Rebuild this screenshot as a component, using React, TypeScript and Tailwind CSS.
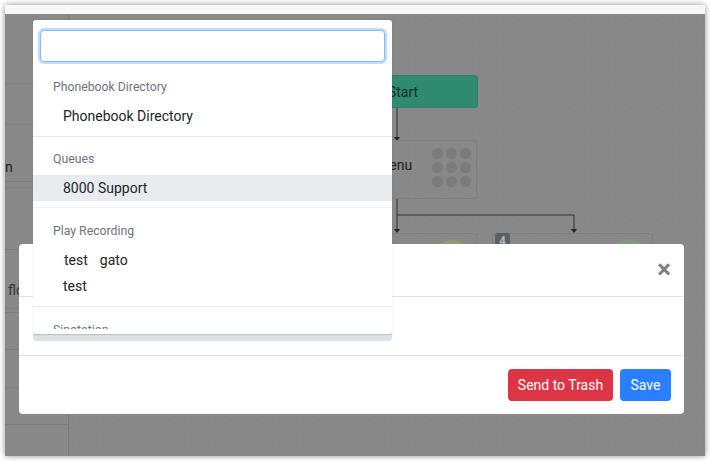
export default function App() {
  const rows = [
    "h-[70px]",
    "h-[41px]",
    "h-[57px]",
    "h-[6px]",
    "h-[62px]",
    "h-[59px]",
    "h-[4px]",
    "h-[37px]",
    "h-[38px]",
    "h-[37px]",
  ];
  return (
    <div className="h-[461px] w-[710px] overflow-hidden bg-white p-[5px] font-['Roboto',sans-serif]">
      <div className="relative flex h-[451px] w-[700px] flex-col overflow-hidden bg-[#888888] shadow-[0_0_6px_rgba(0,0,0,0.45)]">
        <div className="h-[9px] shrink-0 bg-[#f7f7f7]" />
        <div className="flex min-h-0 flex-1">
          <div className="relative w-[64px] shrink-0 border-r border-[#7a7a7a]">
            {rows.map((h, i) => (
              <div key={i} className={`${h} border-b border-[#7b7b7b]`} />
            ))}
            <span className="absolute left-0 top-[143px] text-[14px] text-[#222]">n</span>
            <span className="absolute left-[3px] top-[266px] text-[14px] text-[#333]">flo</span>
          </div>
          <div className="relative flex-1 bg-[radial-gradient(circle,#969696_0.7px,transparent_1px)] bg-[size:12.5px_12.5px]">
            <svg className="absolute left-[0px] top-[0px]" width="636" height="300" fill="none">
              <path d="M328 94V124M328 185V216M328 201H505V216" stroke="#333333" strokeWidth="1" />
              <path d="M325 123h6l-3 4zM325 215h6l-3 4zM502 215h6l-3 4z" fill="#222" />
            </svg>
            <div className="absolute left-[247px] top-[61px] flex h-[33px] w-[162px] items-center justify-center rounded-[3px] border border-[#2a8068] bg-[#2f8a70] text-sm text-[#1d2a26]">
              <span className="ml-[12px]">Start</span>
            </div>
            <div className="absolute left-[247px] top-[126px] flex h-[59px] w-[161px] items-start justify-between rounded-[3px] border border-[#7e7e7e] pl-[60px] pr-[5px] pt-[7px]">
              <span className="mt-[7px] text-[14px] leading-[20px] text-[#222]">Menu</span>
              <div className="grid grid-cols-3 gap-[3px]">
                {[0, 1, 2, 3, 4, 5, 6, 7, 8].map((i) => (
                  <div key={i} className="h-[11px] w-[11px] rounded-full bg-[#7b7b7b]" />
                ))}
              </div>
            </div>
            <div className="absolute left-[247px] top-[219px] h-[70px] w-[161px] rounded-[3px] border border-[#7e7e7e]">
              <div className="absolute left-[115px] top-[6px] h-[40px] w-[40px] rounded-full bg-[#9a9a70]" />
            </div>
            <div className="absolute left-[423px] top-[219px] h-[70px] w-[161px] rounded-[3px] border border-[#7e7e7e]">
              <div className="absolute left-[115px] top-[6px] h-[40px] w-[40px] rounded-full bg-[#84987f]" />
              <div className="absolute left-[2px] top-[-1px] flex h-[15px] w-[15px] items-center justify-center rounded-[3px] bg-[#5a5f64] text-[12px] font-bold text-[#b8b8b8]">
                4
              </div>
            </div>
          </div>
        </div>

        <div className="absolute left-[14px] top-[239px] flex h-[170px] w-[665px] flex-col rounded-[4px] bg-white">
          <div className="flex h-[53px] items-center justify-end border-b border-[#e1e4e7] pb-[3px] pr-[13px]">
            <span className="text-[26px] font-bold leading-none text-[#808080]">×</span>
          </div>
          <div className="h-[59px] border-b border-[#e1e4e7] pl-[14px] pt-[15px]">
            <div className="h-[29px] w-[359px] rounded-[4px] bg-[#dde2e6]" />
          </div>
          <div className="flex flex-1 items-center justify-end gap-[7px] pr-[13px]">
            <button className="h-[32px] w-[105px] rounded-[4px] bg-[#dc3545] text-sm text-white">Send to Trash</button>
            <button className="h-[32px] w-[51px] rounded-[4px] bg-[#297fff] text-sm text-white">Save</button>
          </div>
        </div>

        <div className="absolute left-[28px] top-[15px] flex h-[315px] w-[359px] flex-col rounded-[3px] border-b border-[#bfc4c9] bg-white pb-[5px] shadow-[0_0_1px_rgba(0,0,0,0.3)]">
          <div className="shrink-0 px-[7px] pb-[8px] pt-[10px]">
            <div className="h-[32px] w-full rounded-[4px] border border-[#80bdff] bg-white shadow-[0_0_0_2px_rgba(0,123,255,0.25)]" />
          </div>
          <div className="min-h-0 flex-1 overflow-hidden text-[#212529]">
            <div className="border-b border-[#e9ecef] pb-[7px] pt-[8px]">
              <div className="h-[18px] pl-[20px] text-[12.25px] leading-[18px] text-[#6c757d]">Phonebook Directory</div>
              <div className="mt-[7px] h-[26px] pl-[30px] text-sm leading-[26px]">Phonebook Directory</div>
            </div>
            <div className="border-b border-[#f1f2f3] pb-[6px] pt-[13px]">
              <div className="h-[18px] pl-[20px] text-[12.25px] leading-[18px] text-[#6c757d]">Queues</div>
              <div className="mt-[7px] h-[26px] bg-[#e9ecef] pl-[30px] text-sm leading-[26px]">8000 Support</div>
            </div>
            <div className="border-b border-[#e9ecef] pb-[7px] pt-[14px]">
              <div className="h-[18px] pl-[20px] text-[12.25px] leading-[18px] text-[#6c757d]">Play Recording</div>
              <div className="mt-[7px] flex h-[26px] gap-[12px] pl-[31px] text-sm leading-[26px]">
                <span>test</span>
                <span>gato</span>
              </div>
              <div className="h-[26px] pl-[30px] text-sm leading-[26px]">test</div>
            </div>
            <div className="pt-[14px]">
              <div className="h-[18px] pl-[20px] text-[12.25px] leading-[18px] text-[#6c757d]">Sinotation</div>
            </div>
          </div>
        </div>
      </div>
    </div>
  );
}
